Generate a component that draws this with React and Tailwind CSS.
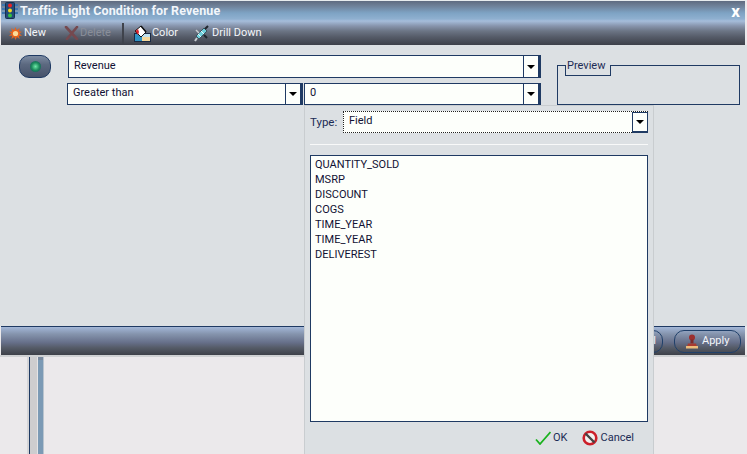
function Arrow() {
  return (
    <svg width="8" height="4" viewBox="0 0 8 4" className="block">
      <path d="M0 0h8L4 4z" fill="#000" />
    </svg>
  );
}

function Select({ children, className, textClass = "pt-[1px]" }) {
  return (
    <div className={`flex items-stretch bg-[#fdfffb] border border-[#1f3a63] ${className}`}>
      <span className={`flex-1 pl-[5px] text-[11px] leading-[16px] text-[#111133] ${textClass}`}>{children}</span>
      <span className="w-[17px] flex items-center justify-center bg-[#fdfffb] border-l border-r-2 border-[#1f3a63]">
        <Arrow />
      </span>
    </div>
  );
}

function TrafficIcon() {
  return (
    <svg width="18" height="17" viewBox="0 0 18 17">
      <path d="M1 3h3M14 3h3M1 7h3M14 7h3M1 11h3M14 11h3" stroke="#3f78b0" strokeWidth="2" />
      <rect x="4.5" y="0.5" width="9" height="16" rx="1" fill="#234a78" stroke="#16304f" />
      <circle cx="9" cy="3.5" r="2" fill="#ee2222" />
      <circle cx="9" cy="8.5" r="2" fill="#f4d820" />
      <circle cx="9" cy="13.5" r="2" fill="#30c040" />
    </svg>
  );
}

function NewIcon() {
  return (
    <svg width="13" height="13" viewBox="0 0 13 13">
      <path d="M6.5 0l1.3 3.3L10.8 1 9.8 4.4l3.2.4-2.6 1.8L13 8.7l-3.2.1.9 3.2-2.8-1.9L6.5 13l-1.2-2.9L2.4 12l.9-3.2L0 8.7l2.6-2.1L0 4.8l3.2-.4L2.2 1l3 2.3z" fill="#e8641c" />
      <circle cx="6.5" cy="6.5" r="2.6" fill="#fbdc9a" />
    </svg>
  );
}

function DeleteIcon() {
  return (
    <svg width="15" height="14" viewBox="0 0 15 14">
      <path d="M2 1l11 12M13 1L3 13" stroke="#75494f" strokeWidth="2.6" strokeLinecap="round" />
    </svg>
  );
}

function ColorIcon() {
  return (
    <svg width="17" height="17" viewBox="0 0 17 17">
      <rect x="0.5" y="8.5" width="16" height="8" fill="#f4d79a" stroke="#1a2a44" />
      <rect x="1" y="9" width="7" height="7" fill="#2f93c4" />
      <path d="M8 9h8v3H8z" fill="#bfe0ee" />
      <path d="M1 6l6-5 5 6-5 5z" fill="#fff" stroke="#111" />
      <path d="M1.5 6l2.5-2 1 3-1 3z" fill="#d8202a" />
      <path d="M7 1l5 6" stroke="#111" strokeWidth="1.4" />
    </svg>
  );
}

function DrillIcon() {
  return (
    <svg width="16" height="17" viewBox="0 0 16 17">
      <path d="M2 11l8-8 3 3-8 8z" fill="#6fd0dc" stroke="#3b5360" />
      <path d="M4 9l3 3M7 6l3 3" stroke="#e8f8fa" />
      <path d="M11 4l3-3" stroke="#20262e" strokeWidth="2" />
      <path d="M3 13l-2 3" stroke="#c8ccd0" strokeWidth="2" />
      <path d="M10 10l3 3" stroke="#20262e" strokeWidth="2" />
      <path d="M2 5l3 3" stroke="#c8ccd0" strokeWidth="1.5" />
    </svg>
  );
}

function ApplyIcon() {
  return (
    <svg width="14" height="15" viewBox="0 0 14 15">
      <circle cx="7" cy="3.5" r="3" fill="#9c2f2f" />
      <rect x="5.5" y="5.5" width="3" height="4" fill="#7c2a2a" />
      <path d="M3 9.5h8l1 3H2z" fill="#a83a30" />
      <rect x="1" y="12" width="12" height="2.5" fill="#eebc7a" />
    </svg>
  );
}

function OkIcon() {
  return (
    <svg width="16" height="14" viewBox="0 0 16 14">
      <path d="M1 8.5l4 4.5L15.5 1" fill="none" stroke="#19b21e" strokeWidth="1.8" />
    </svg>
  );
}

function CancelIcon() {
  return (
    <svg width="16" height="16" viewBox="0 0 16 16">
      <circle cx="8" cy="8" r="6.3" fill="#f4f0f0" stroke="#cc1f2a" strokeWidth="2.6" />
      <path d="M3.5 3.5l9 9" stroke="#444" strokeWidth="2.4" />
    </svg>
  );
}

function ToolItem({ icon, label, dim, className, gap = "gap-[2px]" }) {
  return (
    <div className={`flex items-center ${gap} ${className}`}>
      {icon}
      <span className={`text-[11px] leading-[14px] ${dim ? "text-[#8a8f9a]" : "text-[#f4f6fa]"}`}>{label}</span>
    </div>
  );
}

const fields = ["QUANTITY_SOLD", "MSRP", "DISCOUNT", "COGS", "TIME_YEAR", "TIME_YEAR", "DELIVEREST"];

export default function App() {
  return (
    <div className="relative w-[747px] h-[454px] overflow-hidden bg-[#ebe9eb] flex flex-col font-['Roboto','Liberation_Sans',sans-serif]">
      <div className="h-[1px] bg-[#e8ecee]" />
      <div className="ml-[1px] mr-[2px] h-[44px] flex flex-col bg-[linear-gradient(to_bottom,#5f6b80_0px,#6f8199_5px,#7ea3c4_12px,#8fb0d0_18px,#a6bdda_20px,#8794ac_25px,#6c7585_30px,#555b68_36px,#3d4049_44px)]">
        <div className="h-[19px] flex items-center relative">
          <TrafficIcon />
          <span className="ml-[1px] text-[12.5px] leading-[14px] font-bold tracking-[0.1px] text-[#f2f6fb]">Traffic Light Condition for Revenue</span>
          <span className="ml-auto mr-[5px] text-[17px] leading-[14px] font-bold text-white">x</span>
        </div>
        <div className="h-[25px] flex items-center pl-[8px] pt-[1px]">
          <ToolItem icon={<NewIcon />} label="New" />
          <ToolItem icon={<DeleteIcon />} label="Delete" dim gap="gap-[1px]" className="ml-[18px]" />
          <div className="ml-[11px] w-[2px] h-[21px] bg-[#3f434c]" />
          <ToolItem icon={<ColorIcon />} label="Color" gap="gap-[1px]" className="ml-[10px]" />
          <ToolItem icon={<DrillIcon />} label="Drill Down" className="ml-[16px]" />
        </div>
      </div>

      <div className="h-[281px] bg-[#dce0e3] flex items-start pl-[19px]">
        <div className="mt-[10px] w-[32px] h-[23px] rounded-[10px] border border-[#1f3a63] bg-[linear-gradient(to_bottom,#7d8ca2,#5c6980_40%,#46526a)] flex items-center justify-center">
          <span className="w-[11px] h-[11px] rounded-full bg-[radial-gradient(circle,#6fe8a8_0%,#1c8a5c_50%,#16465a_100%)]" />
        </div>
        <div className="ml-[16px] mt-[10px] w-[474px] flex flex-col">
          <Select className="w-[473px] h-[23px] ml-[1px]" textClass="pt-[2px]">Revenue</Select>
          <div className="flex mt-[5px] gap-[1px]">
            <Select className="w-[236px] h-[22px]">Greater than</Select>
            <Select className="w-[237px] h-[22px]">0</Select>
          </div>
        </div>
        <div className="relative ml-[16px] mt-[20px] w-[183px] h-[40px] border border-[#1f3a63]">
          <div className="absolute left-[7px] -top-[1px] w-[46px] h-[11px] border-x border-b border-[#1f3a63] bg-[#dce0e3]">
            <span className="absolute left-[1px] -top-[6px] text-[11px] leading-[14px] text-[#1c2c55] bg-[#dce0e3]">Preview</span>
          </div>
        </div>
      </div>

      <div className="h-[29px] ml-[1px] mr-[2px] border-t border-[#1f3a63] flex items-center justify-end pr-[4px] bg-[linear-gradient(to_bottom,#a3b7d8,#8594ad_25%,#67708a_55%,#545a66_75%,#3e4149)]">
        <div className="h-[23px] w-[74px] mr-[11px] rounded-[10px] border border-[#20406a] flex items-center justify-end pr-[6px]">
          <span className="text-[11px] text-[#f4f6fa]">Cancel</span>
        </div>
        <div className="h-[23px] w-[67px] rounded-[10px] border border-[#20406a] flex items-center pl-[10px] gap-[3px]">
          <ApplyIcon />
          <span className="text-[11px] text-[#f4f6fa]">Apply</span>
        </div>
      </div>
      <div className="h-[2px] bg-[#cfd1d3]" />

      <div className="flex-1 flex pl-[27px]">
        <div className="w-[2px] bg-[#d6d6d8]" />
        <div className="w-[1px] bg-[#1f3a63]" />
        <div className="w-[7px] bg-[#cdcdcf]" />
        <div className="w-[1px] bg-[#e4e4e6]" />
        <div className="w-[5px] flex flex-col bg-[#7b9ab5]">
          <div className="h-[3px] bg-[#7a8a9e]" />
        </div>
        <div className="w-[1px] bg-[#b9c4ce]" />
      </div>

      <div className="absolute left-[304px] top-[105px] w-[350px] h-[349px] bg-[#dce0e3] border-x border-t border-[#c9cdd0] flex flex-col px-[5px]">
        <div className="flex items-center mt-[5px] h-[22px]">
          <span className="w-[33px] text-[11.5px] leading-[14px] text-[#1c2c55]">Type:</span>
          <div className="flex-1 h-[22px] flex items-stretch bg-[#fdfffb] border border-dotted border-[#222]">
            <span className="flex-1 pl-[5px] pt-[1px] text-[11px] leading-[16px] text-[#111133]">Field</span>
            <span className="w-[16px] mr-[-1px] mb-[-1px] flex items-center justify-center border border-[#1f3a63] border-b-2 bg-[#fdfffb]">
              <Arrow />
            </span>
          </div>
        </div>
        <div className="mt-[11px] h-[1px] bg-[#f8f9f9]" />
        <div className="mt-[10px] h-[267px] bg-[#fdfffb] border border-[#1f3a63] pl-[4px] pt-[1px] flex flex-col">
          {fields.map((f, i) => (
            <div key={i} className="h-[15px] text-[11px] leading-[15px] text-[#111133]">{f}</div>
          ))}
        </div>
        <div className="flex items-center justify-end mt-[8px] pr-[14px]">
          <OkIcon />
          <span className="ml-[2px] text-[11px] leading-[14px] text-[#1c2c55]">OK</span>
          <span className="ml-[14px]"><CancelIcon /></span>
          <span className="ml-[3px] text-[11px] leading-[14px] text-[#1c2c55]">Cancel</span>
        </div>
      </div>
    </div>
  );
}
